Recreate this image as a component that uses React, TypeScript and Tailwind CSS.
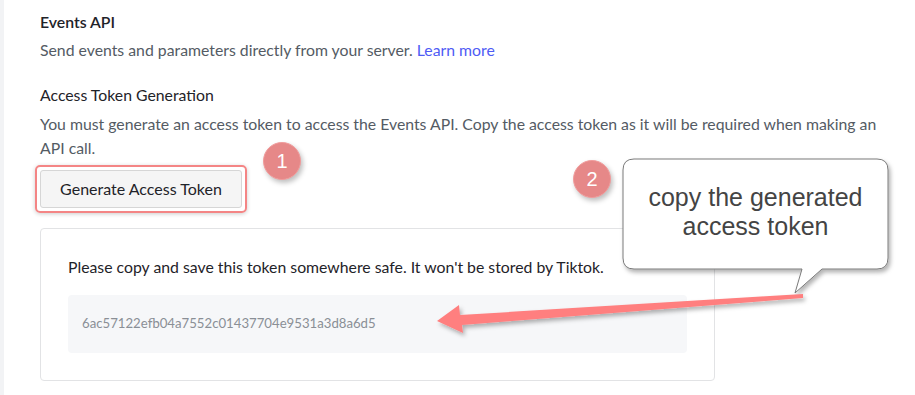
import React from 'react';

const Badge = ({ n, className }: { n: string; className: string }) => (
  <div
    className={`absolute w-[38px] h-[38px] rounded-full bg-[#e68888] border border-[#f19c9c] text-white text-[20px] flex items-center justify-center shadow-[2px_3px_5px_rgba(0,0,0,0.25)] ${className}`}
    style={{ fontFamily: '"Liberation Sans", Arial, sans-serif' }}
  >
    {n}
  </div>
);

export default function App() {
  return (
    <div className="relative w-[915px] h-[395px] overflow-hidden bg-white flex">
      <div className="w-[4px] bg-[#f2f3f5] shrink-0" />
      <div
        className="pl-[36px] pt-[12px] text-[15.8px] text-[#545b64]"
        style={{ fontFamily: 'Lato, "Open Sans", sans-serif' }}
      >
        <h2 className="text-[15.8px] font-semibold text-[#1f2329] leading-[20px]">Events API</h2>
        <p className="mt-[8px] leading-[20px]">
          Send events and parameters directly from your server.{' '}
          <span className="text-[#4f5bf5]">Learn more</span>
        </p>
        <h3 className="mt-[25px] text-[#1f2329] leading-[20px]">Access Token Generation</h3>
        <p className="mt-[7px] leading-[24px] w-[852px]">
          You must generate an access token to access the Events API. Copy the access token as it will be required when making an API call.
        </p>
        <div className="mt-[5px] -ml-[5px] w-[212px] h-[48px] rounded-[5px] border-2 border-[#f48585] p-[3px] shadow-[0_1px_4px_rgba(0,0,0,0.2)]">
          <button className="w-full h-full rounded-[3px] bg-[#f5f5f5] border border-[#d6d6d6] text-[16px] text-[#1f2329]">
            Generate Access Token
          </button>
        </div>
        <div className="mt-[15px] w-[675px] h-[153px] border border-[#e2e3e5] rounded-[4px] px-[27px] pt-[28px]">
          <p className="text-[15.8px] text-[#1f2329] leading-[20px]">
            Please copy and save this token somewhere safe. It won't be stored by Tiktok.
          </p>
          <div className="mt-[18px] h-[58px] bg-[#f6f7f9] rounded-[4px] flex items-center px-[14px] text-[13.2px] text-[#8a8f96]">
            6ac57122efb04a7552c01437704e9531a3d8a6d5
          </div>
        </div>
      </div>

      <Badge n="1" className="left-[263px] top-[142px]" />
      <Badge n="2" className="left-[573px] top-[160px]" />

      <svg className="absolute left-0 top-0 pointer-events-none" width="915" height="395">
        <defs>
          <filter id="sh" x="-20%" y="-20%" width="140%" height="160%">
            <feDropShadow dx="2" dy="3" stdDeviation="2" floodColor="#000" floodOpacity="0.3" />
          </filter>
        </defs>
        <path
          d="M623 170 Q623 159 634 159 L877 159 Q888 159 888 170 L888 258 Q888 269 877 269 L822 269 L795 293 L802 269 L634 269 Q623 269 623 258 Z"
          fill="#fff"
          stroke="#7a7a7a"
          strokeWidth="1"
          filter="url(#sh)"
        />
        <path
          d="M803 294 L803 298 L462 325 L463 333 L437 321 L459 305 L460 315 Z"
          fill="#ff7f7f"
          filter="url(#sh)"
        />
      </svg>

      <div
        className="absolute left-[623px] top-[183px] w-[265px] text-center text-[25px] leading-[29px] text-[#444]"
        style={{ fontFamily: '"Liberation Sans", Arial, sans-serif' }}
      >
        copy the generated
        <br />
        access token
      </div>
    </div>
  );
}
